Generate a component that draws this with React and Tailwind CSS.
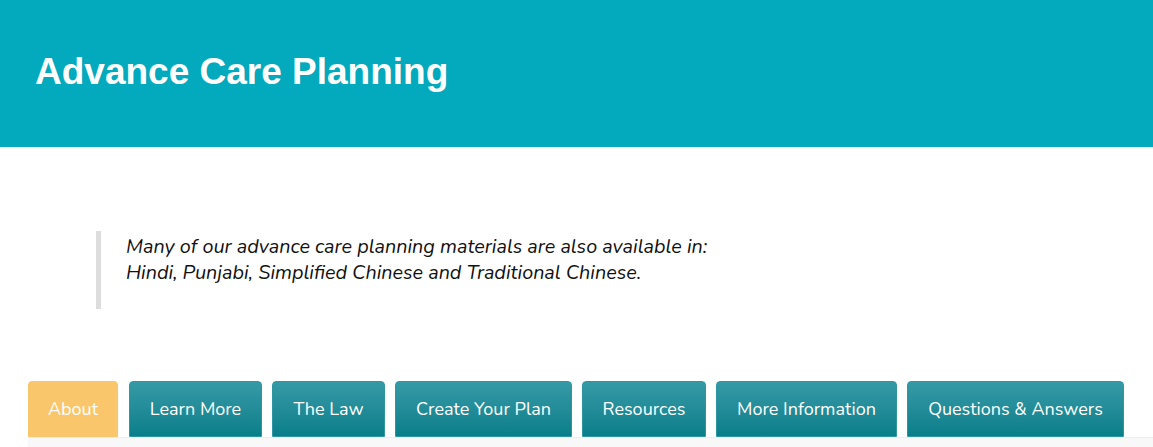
import React from 'react';

const tabs = [
    { label: "About", w: "w-[90px]" },
    { label: "Learn More", w: "w-[133px]" },
    { label: "The Law", w: "w-[113px]" },
    { label: "Create Your Plan", w: "w-[177px]" },
    { label: "Resources", w: "w-[124px]" },
    { label: "More Information", w: "w-[181px]" },
    { label: "Questions & Answers", w: "w-[217px]" },
];

export default function App() {
    return (
        <div className="min-h-screen bg-white">
            {/* Banner */}
            <div className="h-[147px] bg-[#03a9bc] flex items-center pl-[35px]">
                <h1 className="text-white font-bold text-[37px] leading-none font-['Liberation_Sans',Arial,sans-serif] -mt-[4px]">
                    Advance Care Planning
                </h1>
            </div>

            {/* Note */}
            <div className="pt-[84px] pl-[96px]">
                <blockquote className="border-l-[5px] border-[#dddddd] pl-[25px] pt-[3px] h-[78px] italic text-[19.8px] leading-[26px] text-[#111] font-['Nunito',Lato,sans-serif]">
                    Many of our advance care planning materials are also available in:
                    <br />
                    Hindi, Punjabi, Simplified Chinese and Traditional Chinese.
                </blockquote>
            </div>

            {/* Tabs */}
            <div className="pt-[72px] pl-[28px]">
                <div className="flex gap-[10px] font-['Nunito',Lato,sans-serif]">
                    {tabs.map((t, i) => (
                        <div
                            key={t.label}
                            className={i === 0
                                ? `${t.w} mr-[1px] h-[56px] flex items-center justify-center rounded-t-[4px] bg-[#f9c66b] border border-[#f9c66b] text-white text-[18px]`
                                : `${t.w} h-[56px] flex items-center justify-center rounded-t-[4px] bg-gradient-to-b from-[#349aa6] to-[#067f8a] border border-[#2e96a3] text-white text-[18px]`}
                        >
                            {t.label}
                        </div>
                    ))}
                </div>
                <div className="h-[40px] bg-[#f8f8f8] border-t border-[#eeeeee]" />
            </div>
        </div>
    );
}
